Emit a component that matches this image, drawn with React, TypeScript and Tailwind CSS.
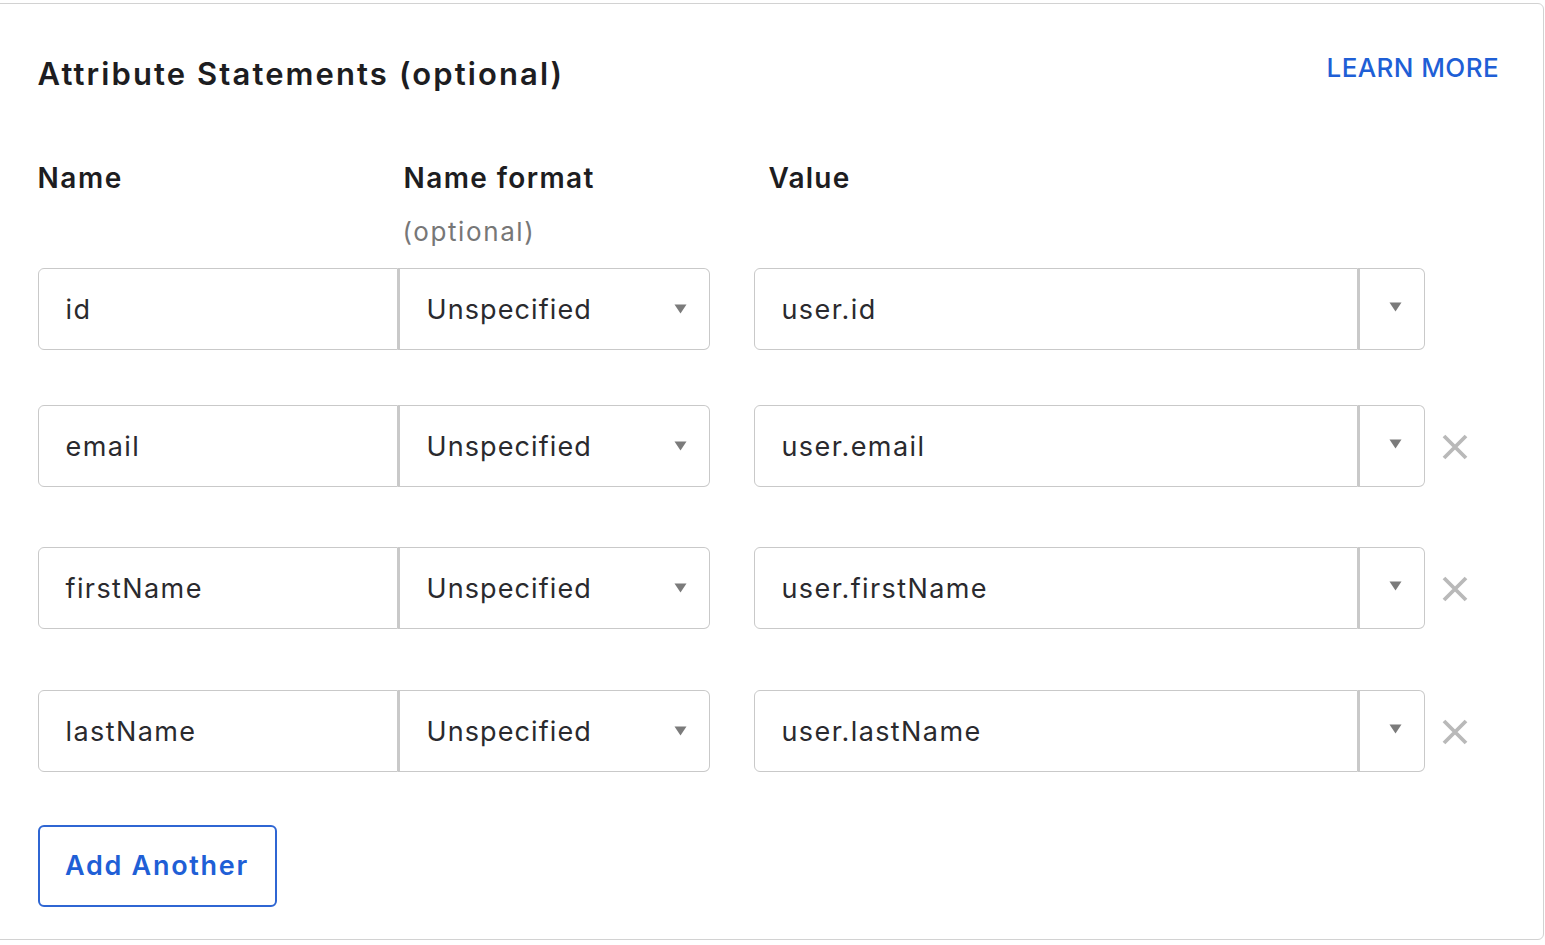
import React from "react";

const rows = [
  { name: "id", value: "user.id", removable: false, mt: "mt-[0px]" },
  { name: "email", value: "user.email", removable: true, mt: "mt-[55px]" },
  { name: "firstName", value: "user.firstName", removable: true, mt: "mt-[60px]" },
  { name: "lastName", value: "user.lastName", removable: true, mt: "mt-[61px]" },
];

function Caret() {
  return (
    <svg width="13" height="10" viewBox="0 0 13 10" className="block">
      <path d="M0.5 0.5 L12.5 0.5 L6.5 9.5 Z" fill="#7b7b7b" />
    </svg>
  );
}

function XIcon() {
  return (
    <svg width="26" height="26" viewBox="0 0 26 26" className="block">
      <path d="M2 2 L24 24 M24 2 L2 24" stroke="#b9b9b9" strokeWidth="3.8" strokeLinecap="butt" />
    </svg>
  );
}

export default function App() {
  return (
    <div
      className="w-[1545px] h-[945px] bg-white overflow-hidden pt-[3px]"
      style={{ fontFamily: "Inter, 'Noto Sans', sans-serif" }}
    >
      <div className="ml-[-10px] w-[1554px] h-[937px] border-[1.5px] border-[#d2d2d2] rounded-[6px] bg-white pl-[46.5px] pr-[44px] text-[#1d1d21]">
        {/* header */}
        <div className="flex items-start justify-between pt-[52px]">
          <h2 className="text-[31px] leading-[36px] font-semibold tracking-[2.1px] text-[#1d1d21]">
            Attribute Statements (optional)
          </h2>
          <a className="text-[26px] leading-[32px] font-medium tracking-[0.4px] text-[#1f5fd6] mt-[-4px]">
            LEARN MORE
          </a>
        </div>

        {/* column headers */}
        <div className="flex mt-[70px]">
          <div className="w-[366px] text-[28px] leading-[32px] font-semibold tracking-[1.6px]">Name</div>
          <div className="w-[365px]">
            <div className="text-[28px] leading-[32px] font-semibold tracking-[1.4px]">Name format</div>
            <div className="text-[26px] leading-[32px] text-[#777777] mt-[22px] ml-[-1px] tracking-[1.6px]">(optional)</div>
          </div>
          <div className="text-[28px] leading-[32px] font-semibold tracking-[1.2px]">Value</div>
        </div>

        {/* rows */}
        <div className="mt-[20px]">
          {rows.map((r) => (
            <div key={r.name} className={`flex items-center ${r.mt}`}>
              <div className="flex h-[82px]">
                <div className="w-[360px] h-full border-[1.5px] border-[#c9c9c9] rounded-l-[6px] flex items-center pl-[27px] pt-[2px] text-[27px] tracking-[1.4px] text-[#2a2a2e]">
                  {r.name}
                </div>
                <div className="w-[312px] h-full border-[1.5px] border-l-[2.5px] border-[#c9c9c9] rounded-r-[6px] flex items-center justify-between pl-[27px] pr-[22px] text-[27px] tracking-[1.1px] text-[#2a2a2e]">
                  <span className="pt-[2px]">Unspecified</span>
                  <Caret />
                </div>
              </div>
              <div className="flex h-[82px] ml-[44px]">
                <div className="w-[604px] h-full border-[1.5px] border-[#c9c9c9] rounded-l-[6px] flex items-center pl-[27px] pt-[2px] text-[27px] tracking-[1.4px] text-[#2a2a2e]">
                  {r.value}
                </div>
                <div className="w-[67px] h-full border-[1.5px] border-l-[2.5px] border-[#c9c9c9] rounded-r-[6px] flex items-center justify-center pl-[7px] pb-[4px]">
                  <Caret />
                </div>
              </div>
              <div className="ml-[17px] w-[26px] h-[26px] mt-[2px]">
                {r.removable ? <XIcon /> : null}
              </div>
            </div>
          ))}
        </div>

        {/* add another */}
        <button className="mt-[53px] w-[239px] h-[82px] border-2 border-[#2f66d3] rounded-[6px] text-[27px] font-semibold tracking-[1.7px] text-[#1f5fd6] flex items-center justify-center">
          Add Another
        </button>
      </div>
    </div>
  );
}
